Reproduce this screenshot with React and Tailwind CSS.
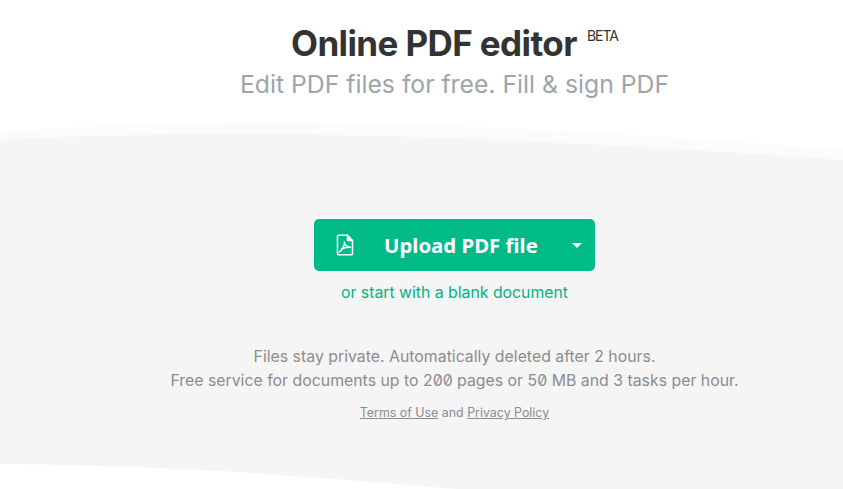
const FileIcon = () => (
  <svg width="18" height="22" viewBox="0 0 18 22" fill="none" stroke="currentColor" strokeWidth="1.5" strokeLinejoin="round" strokeLinecap="round">
    <path d="M1.5 2.2a1 1 0 0 1 1-1h9l5 5.2v13.4a1 1 0 0 1-1 1h-13a1 1 0 0 1-1-1z" />
    <path d="M11.5 1.2v5.2h5" fill="currentColor" />
    <path d="M3.4 18c2-1.400 3.800-3.800 5-7.800.2-.8.2-1.600 0-2.200 0 2.400 1.800 4.600 6.200 5.200-2.800-.2-6.800.4-9.200 2.200" strokeWidth="1.500" />
  </svg>
);

const Waves = () => (
  <svg className="absolute inset-0 w-full h-full" viewBox="0 0 843 489" preserveAspectRatio="none">
    <path d="M0 132C180 120 420 115 843 150V0H0z" fill="#ffffff" />
    <path d="M0 140C180 130 420 130 843 160V0H0z" fill="#ffffff" fillOpacity="0.6" />
    <path d="M0 464C160 465 300 475 455 489H0z" fill="#ffffff" />
  </svg>
);

export default function App() {
  return (
    <div className="relative h-[489px] w-full overflow-hidden bg-[#f5f5f5] font-['Inter',sans-serif]">
      <Waves />
      <div className="relative flex flex-col items-center pl-[66px]">
        <h1 className="mt-[21px] flex items-start text-[35px] leading-[44px] font-bold tracking-[-0.6px] text-[#333333]">
          Online PDF editor
          <span className="ml-[10px] mt-[6px] text-[14px] leading-[18px] font-normal tracking-[-1px]">BETA</span>
        </h1>
        <p className="mt-[3px] text-[24.75px] leading-[32px] text-[#9ea5a9]">Edit PDF files for free. Fill &amp; sign PDF</p>

        <div className="mt-[119px] flex h-[52px] w-[281px] items-center rounded-[5px] bg-[#00bb88] text-white">
          <span className="ml-[22px] flex"><FileIcon /></span>
          <span className="ml-[30px] font-['Noto_Sans',sans-serif] text-[20.4px] font-bold">Upload PDF file</span>
          <span className="ml-[34px] h-0 w-0 border-x-[5px] border-t-[5px] border-x-transparent border-t-white" />
        </div>

        <a className="mt-[11px] text-[15.8px] leading-[22px] text-[#00b386]">or start with a blank document</a>

        <div className="mt-[41px] text-center text-[15.85px] leading-[24px] text-[#8c8c8c]">
          <p>Files stay private. Automatically deleted after 2 hours.</p>
          <p>Free service for documents up to <span className="slashed-zero">200</span> pages or <span className="slashed-zero">50</span> MB and 3 tasks per hour.</p>
        </div>

        <p className="mt-[10px] text-[12.4px] leading-[20px] text-[#8c8c8c]">
          <a className="underline">Terms of Use</a> and <a className="underline">Privacy Policy</a>
        </p>
      </div>
    </div>
  );
}
